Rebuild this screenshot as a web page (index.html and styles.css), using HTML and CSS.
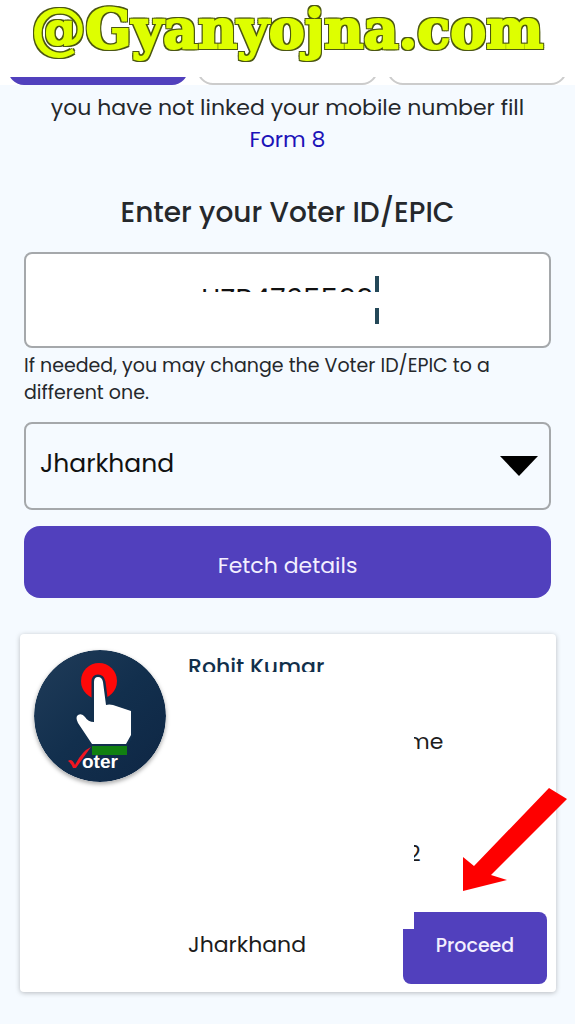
FILE: index.html
```html
<!DOCTYPE html>
<html lang="en">
<head>
    <meta charset="UTF-8">
    <meta name="viewport" content="width=device-width, initial-scale=1.0">
    <title>Voter ID - Fetch details</title>
    <link rel="stylesheet" href="styles.css">
</head>
<body>
    <header class="banner">
        <h1>@Gyanyojna.com</h1>
        <nav class="tabs">
            <button type="button" class="tab active" aria-label="Step 1"></button>
            <button type="button" class="tab" aria-label="Step 2"></button>
            <button type="button" class="tab" aria-label="Step 3"></button>
        </nav>
    </header>

    <main class="container">
        <p class="notice">you have not linked your mobile number fill<br><a href="#form8">Form 8</a></p>

        <form id="voter-form">
            <label class="title" for="epic">Enter your Voter ID/EPIC</label>
            <div class="field">
                <input type="text" id="epic" value="UZB4765599">
                <span class="mask"></span>
                <span class="caret"></span>
            </div>
            <p class="hint">If needed, you may change the Voter ID/EPIC to a different one.</p>
            <div class="field">
                <select id="state" aria-label="State">
                    <option>Jharkhand</option>
                </select>
                <svg class="arrow-down" viewBox="0 0 38 20"><path d="M0 0h38L19 20z"/></svg>
            </div>
            <button type="button" class="fetch-btn">Fetch details</button>
        </form>

        <section class="card">
            <svg class="logo" viewBox="0 0 132 132" role="img" aria-label="Voter">
                <defs>
                    <linearGradient id="navy" x1="0" y1="0" x2="1" y2="1">
                        <stop offset="0" stop-color="#203c59"/>
                        <stop offset=".5" stop-color="#122f4d"/>
                        <stop offset="1" stop-color="#0e2644"/>
                    </linearGradient>
                </defs>
                <circle cx="66" cy="66" r="66" fill="url(#navy)"/>
                <circle cx="65" cy="31" r="18" fill="#fe0909"/>
                <path d="M60 72V32q0-5 4-5t5 5l3 23q3-1 7 0l18 6v24l-5 9H58L44 73q-3-6 0-8 4-2 7 2 3 5 9 5z" fill="#fff" stroke="#122f4d" stroke-width="5" paint-order="stroke"/>
                <path d="M58 96h35v9H58z" fill="#118011"/>
                <path d="M34 111q4-3 7 4 7-14 16-18Q49 108 42 118h-3q-2-5-5-7z" fill="#f01522"/>
                <text x="48" y="118" class="logo-text">oter</text>
            </svg>
            <div class="details">
                <h2 class="name">Rohit Kumar</h2>
                <span class="value clip-m">me</span>
                <span class="value clip-2">2</span>
                <span class="state">Jharkhand</span>
                <button type="button" class="proceed-btn">Proceed</button>
            </div>
            <svg class="pointer" viewBox="0 0 106 104"><path d="M87 0l18 11-76 76 16 5L1 103V69l11 9z" fill="#fe0000"/></svg>
        </section>
    </main>
</body>
</html>
```
FILE: styles.css
```css
* {
    box-sizing: border-box;
}
body {
    font-family: Poppins, Inter, sans-serif;
    margin: 0;
    color: #25282c;
    background: #f5faff;
}
button, input, select {
    font-family: inherit;
}
.banner {
    background: #fff;
}
.banner h1 {
    margin: 0;
    height: 77px;
    font-family: "DejaVu Serif", serif;
    font-size: 54px;
    font-weight: bold;
    line-height: 58px;
    text-align: center;
    color: #deff00;
    -webkit-text-stroke: 2px #deff00;
    /* dark outline around the thickened letters */
    text-shadow: 2px 0 #4c5712, -2px 0 #4c5712, 0 2px #4c5712, 0 -2px #4c5712,
        2px 2px #4c5712, -2px -2px #4c5712, 2px -2px #4c5712, -2px 2px #4c5712;
}
.tabs {
    display: flex;
    gap: 9px;
    height: 8px;
    padding: 0 8px;
    overflow: hidden;
    align-items: flex-end;
}
.tab {
    flex: 1;
    height: 40px;
    border: 2px solid #ccc;
    border-radius: 16px;
    background: #fff;
}
.tab.active {
    background: #5140bd;
    border-color: #5140bd;
}
.container {
    padding: 7px 24px 32px;
}
.notice {
    margin: 0 0 38px;
    font-size: 22px;
    line-height: 32px;
    text-align: center;
}
.notice a {
    color: #1b12b8;
    text-decoration: none;
}
.title {
    display: block;
    margin-bottom: 20px;
    font-size: 28px;
    font-weight: 500;
    line-height: 38px;
    text-align: center;
}
.field {
    position: relative;
}
#epic, #state {
    display: block;
    width: 100%;
    border: 2px solid #a5a8ab;
    border-radius: 8px;
    color: #111;
}
#epic {
    height: 96px;
    padding: 0 2px;
    font-size: 28px;
    text-align: center;
    background: #fff;
}
/* hides the lower part of the number */
.mask {
    position: absolute;
    left: 16px;
    right: 16px;
    top: 40px;
    bottom: 16px;
    background: #fff;
}
.caret {
    position: absolute;
    left: 351px;
    top: 24px;
    width: 4px;
    height: 48px;
    background: linear-gradient(#244858 16px, #fff 16px, #fff 32px, #244858 32px);
}
.hint {
    margin: 4px 0 16px;
    font-size: 19px;
    line-height: 27px;
}
#state {
    height: 88px;
    padding: 0 14px 6px;
    font-size: 25px;
    appearance: none;
    background: transparent;
}
.arrow-down {
    position: absolute;
    right: 13px;
    top: 34px;
    width: 38px;
    height: 20px;
    pointer-events: none;
}
.fetch-btn {
    width: 100%;
    height: 72px;
    margin-top: 16px;
    padding-top: 8px;
    border: none;
    border-radius: 16px;
    font-size: 22px;
    color: #f3efff;
    background: #5140bd;
    cursor: pointer;
}
.card {
    position: relative;
    display: flex;
    gap: 22px;
    margin: 36px -5px 0 -4px;
    padding: 16px 9px 8px 14px;
    border-radius: 4px;
    background: #fff;
    box-shadow: 0 1px 5px rgba(0, 0, 0, 0.25);
}
.logo {
    flex: none;
    width: 132px;
    height: 132px;
    border-radius: 50%;
    box-shadow: 0 2px 4px rgba(0, 0, 0, 0.35);
}
.logo-text {
    font-family: "Liberation Sans", sans-serif;
    font-size: 19px;
    font-weight: bold;
    fill: #fff;
}
.details {
    flex: 1;
    display: grid;
    grid-template-columns: 1fr 144px;
    grid-template-rows: 52px 90px 120px 72px;
    font-size: 22px;
    color: #1c1c1c;
}
.name {
    grid-column: 1 / 3;
    height: 22px;
    margin: 0;
    overflow: hidden;
    font-size: 22px;
    font-weight: 500;
    line-height: 34px;
    color: #12304b;
}
.value {
    grid-column: 2;
    height: 32px;
    margin: 24px 0 0 11px;
    line-height: 32px;
    overflow: hidden;
}
.clip-m {
    text-indent: -7px;
}
.clip-2 {
    margin-top: 46px;
    text-indent: -6px;
}
.state {
    line-height: 66px;
}
.proceed-btn {
    padding-bottom: 7px;
    border: none;
    border-radius: 8px;
    font-size: 19px;
    font-weight: 500;
    color: #f3efff;
    background: #5140bd;
    clip-path: polygon(11px 0, 100% 0, 100% 100%, 0 100%, 0 17px, 11px 17px);
    cursor: pointer;
}
.pointer {
    position: absolute;
    right: -12px;
    top: 154px;
    width: 106px;
    height: 104px;
    pointer-events: none;
}
```
